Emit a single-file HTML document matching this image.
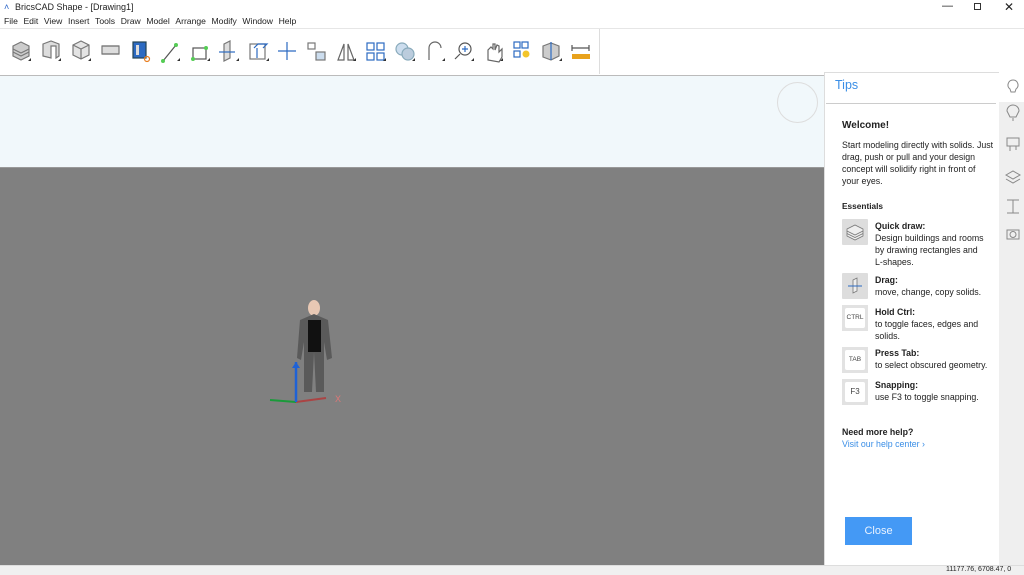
<!DOCTYPE html>
<html><head><style>
*{margin:0;padding:0;box-sizing:border-box}
body{width:1024px;height:575px;overflow:hidden;background:#fff;font-family:"Liberation Sans",sans-serif;position:relative;font-size:11px;color:#222}
.abs{position:absolute}
.menu span{margin-right:5.6px}
.tip{position:absolute;left:842px;font-size:8.8px;line-height:12px;color:#222;white-space:nowrap}
.tip b{font-weight:bold}
.box{position:absolute;left:842px;width:26px;height:26px;background:#ddd;border-radius:1px}
.key{position:absolute;left:842px;width:26px;height:26px;background:#e2e2e2}
.key div{position:absolute;left:3px;top:3px;width:20px;height:20px;background:#fff;border-radius:2px;font-size:6.5px;color:#444;text-align:center;line-height:20px}
</style></head><body>
<div class="abs" style="left:4px;top:2px;font-size:9px;color:#2a64c8">&#x2C4;</div>
<div class="abs" style="left:15px;top:2px;font-size:9px;color:#222">BricsCAD Shape - [Drawing1]</div>
<div class="abs" style="left:942px;top:0px;font-size:11px">&#8212;</div>
<div class="abs" style="left:974px;top:3px;width:7px;height:7px;border:1px solid #333"></div>
<div class="abs" style="left:1004px;top:0px;font-size:12px">&#x2715;</div>
<div class="abs menu" style="left:4px;top:16px;font-size:8.6px">
<span>File</span><span>Edit</span><span>View</span><span>Insert</span><span>Tools</span><span>Draw</span><span>Model</span><span>Arrange</span><span>Modify</span><span>Window</span><span>Help</span></div>
<div class="abs" style="left:0;top:28px;width:1024px;height:47px;background:#fff;border-top:1px solid #e6e6e6"></div>
<div class="abs" style="left:599px;top:29px;width:1px;height:45px;background:#ddd"></div>
<svg class="abs" style="left:0;top:28px" width="600" height="47">
<g fill="none" stroke-width="1.2">
<g stroke="#777"><path d="M13 18l8-4 8 4v10l-8 4-8-4z" fill="#ccc"/><path d="M13 21l8 4 8-4M13 24l8 4 8-4"/></g>
<g stroke="#777"><path d="M43 16l8-3 8 3v12l-3 2v-12l-5 0v12l-8-2z" fill="#ddd"/></g>
<g stroke="#777"><path d="M73 17l8-4 8 4v10l-8 4-8-4z" fill="#e4e4e4"/><path d="M73 17l8 4 8-4M81 21v10"/></g>
<g stroke="#777"><rect x="102" y="18" width="17" height="8" fill="#ddd"/><path d="M102 18h17M102 26h17"/></g>
<g><rect x="133" y="14" width="13" height="16" fill="#2c6ac2" stroke="#245"/><rect x="136" y="17" width="3" height="10" fill="#ddd"/><circle cx="147" cy="31" r="2.5" stroke="#e87d1e"/></g>
<g stroke="#555"><path d="M163 33l13-16"/></g><circle cx="163" cy="33" r="2" fill="#5c5" /><circle cx="176" cy="17" r="2" fill="#5c5"/>
<g stroke="#555"><rect x="193" y="20" width="13" height="11"/></g><circle cx="206" cy="20" r="2" fill="#5c5"/><circle cx="193" cy="31" r="2" fill="#5c5"/>
<g stroke="#777"><path d="M224 16l6-3v17l-6 3z" fill="#ddd"/><path d="M219 24h16" stroke="#2c6ac2"/></g>
<g stroke="#2c6ac2"><rect x="250" y="16" width="15" height="15" stroke="#777"/><path d="M254 20l4-4h9l-4 4M257 30v-10"/></g>
<g stroke="#2c6ac2"><path d="M287 14v18M278 23h18"/></g>
<g stroke="#777"><rect x="308" y="15" width="7" height="6"/><rect x="316" y="24" width="9" height="8" fill="#cde"/></g>
<g stroke="#666"><path d="M344 16v16h-6zM348 16v16h6z"/></g>
<g stroke="#2c6ac2"><rect x="367" y="15" width="7" height="7"/><rect x="377" y="15" width="7" height="7"/><rect x="367" y="25" width="7" height="7"/><rect x="377" y="25" width="7" height="7"/></g>
<g stroke="#8ab"><circle cx="402" cy="21" r="6" fill="#cde"/><circle cx="408" cy="26" r="6" fill="#bcd"/></g>
<g stroke="#666"><path d="M429 32v-12a6 6 0 0 1 12 0"/></g>
<g stroke="#555"><circle cx="465" cy="21" r="6"/><path d="M460 26l-5 5"/><path d="M465 18v6M462 21h6" stroke="#2c6ac2"/></g>
<g stroke="#666"><path d="M488 32v-10l3-3 2 2v-5l2 0v6l2-5 2 1v6l3-3v8l-3 5z"/></g>
<g stroke="#2c6ac2"><rect x="514" y="14" width="6" height="6"/><rect x="522" y="14" width="6" height="6"/><rect x="514" y="23" width="6" height="6"/></g><circle cx="526" cy="26" r="3.5" fill="#f3c52b"/>
<g stroke="#777"><path d="M543 18l8-3 8 3v10l-8 4-8-3z" fill="#ccc"/></g><path d="M551 14v18" stroke="#2c6ac2"/>
<g><path d="M572 20h17M572 17v6M589 17v6" stroke="#555"/><rect x="572" y="26" width="18" height="5" fill="#e8a21c"/></g>
</g>
<g fill="#333"><path d="M28 33h3v-3zM58 33h3v-3zM88 33h3v-3zM177 33h3v-3zM207 33h3v-3zM236 33h3v-3zM266 33h3v-3zM353 33h3v-3zM383 33h3v-3zM412 33h3v-3zM442 33h3v-3zM471 33h3v-3zM500 33h3v-3zM559 33h3v-3z"/></g>
</svg>
<div class="abs" style="left:0;top:75px;width:824px;height:93px;background:#f1f8fb;border-top:1px solid #bbb;border-bottom:1px solid #999"></div>
<div class="abs" style="left:777px;top:82px;width:41px;height:41px;border:1px solid #ddd;border-radius:50%"></div>
<div class="abs" style="left:0;top:168px;width:824px;height:397px;background:#808080"></div>
<svg class="abs" style="left:260px;top:290px" width="100" height="120">
<ellipse cx="54" cy="18" rx="6" ry="8" fill="#e8c8b4"/>
<path d="M40 30l14-6 14 6 4 38-5 2-3-18 0 50-8 0-2-40-2 40-8 0 0-50-3 18-4-2z" fill="#5a5a5a"/>
<rect x="48" y="30" width="13" height="32" fill="#111"/>
<path d="M36 112l-26-2" stroke="#1a9a3a" stroke-width="2"/>
<path d="M36 112l30-4" stroke="#a44" stroke-width="2"/>
<path d="M36 112v-40" stroke="#1f62d6" stroke-width="2.5"/><path d="M32 78l4-6 4 6z" fill="#1f62d6"/>
<text x="75" y="112" font-size="9" fill="#d77">X</text>
</svg>
<div class="abs" style="left:824px;top:72px;width:175px;height:493px;background:#fff;border-left:1px solid #ddd;border-top:1px solid #ddd"></div>
<div class="abs" style="left:826px;top:103px;width:170px;height:1px;background:#ccc"></div>
<div class="abs" style="left:835px;top:78px;font-size:12.5px;color:#3a8ee6">Tips</div>
<div class="tip" style="top:120px;font-size:10px;font-weight:bold">Welcome!</div>
<div class="tip" style="top:139px">Start modeling directly with solids. Just<br>drag, push or pull and your design<br>concept will solidify right in front of<br>your eyes.</div>
<div class="tip" style="top:200px;font-weight:bold;font-size:8.3px">Essentials</div>
<div class="box" style="top:219px"></div>
<svg class="abs" style="left:845px;top:223px" width="20" height="18" fill="#eee" stroke="#777" stroke-width="0.8"><path d="M2 6l8-4 8 4v7l-8 4-8-4z"/><path d="M2 8l8 4 8-4M2 10.5l8 4 8-4" fill="none"/></svg>
<div class="tip" style="left:875px;top:220px"><b>Quick draw:</b><br>Design buildings and rooms<br>by drawing rectangles and<br>L-shapes.</div>
<div class="box" style="top:273px"></div>
<svg class="abs" style="left:845px;top:276px" width="20" height="20"><path d="M8 4l4-2v13l-4 2z" fill="#eee" stroke="#777" stroke-width="0.8"/><path d="M3 10h14" stroke="#2c6ac2"/></svg>
<div class="tip" style="left:875px;top:274px"><b>Drag:</b><br>move, change, copy solids.</div>
<div class="key" style="top:305px"><div>CTRL</div></div>
<div class="tip" style="left:875px;top:306px"><b>Hold Ctrl:</b><br>to toggle faces, edges and<br>solids.</div>
<div class="key" style="top:347px"><div>TAB</div></div>
<div class="tip" style="left:875px;top:347px"><b>Press Tab:</b><br>to select obscured geometry.</div>
<div class="key" style="top:379px"><div style="font-size:8px">F3</div></div>
<div class="tip" style="left:875px;top:379px"><b>Snapping:</b><br>use F3 to toggle snapping.</div>
<div class="tip" style="top:426px;font-weight:bold">Need more help?</div>
<div class="tip" style="top:438px;color:#3a8ee6">Visit our help center &#x203A;</div>
<div class="abs" style="left:845px;top:517px;width:67px;height:28px;background:#4499f5;color:#e8f2ff;font-size:11px;text-align:center;line-height:28px">Close</div>
<div class="abs" style="left:999px;top:72px;width:25px;height:493px;background:#efefef"></div>
<div class="abs" style="left:999px;top:72px;width:25px;height:30px;background:#fff"></div>
<svg class="abs" style="left:1000px;top:75px" width="24" height="170" fill="none" stroke="#888" stroke-width="1">
<path d="M13 5a5 5 0 0 0-3 9l1 3h4l1-3a5 5 0 0 0-3-9z"/>
<path d="M7 36a6 6 0 0 1 12 0l-3 6h-6z M13 43v3"/>
<rect x="7" y="63" width="12" height="8"/><path d="M10 71v5M16 71v4"/>
<path d="M6 100l7-4 7 4-7 4z M6 104l7 4 7-4"/>
<path d="M7 125h12M7 138h12M13 125v13"/>
<rect x="7" y="155" width="12" height="9"/><circle cx="13" cy="159.5" r="3"/>
</svg>
<div class="abs" style="left:0;top:565px;width:1024px;height:10px;background:#f0f0f0;border-top:1px solid #ddd"></div>
<div class="abs" style="left:946px;top:566px;font-size:7px;color:#222">11177.76, 6708.47, 0</div>
</body></html>
